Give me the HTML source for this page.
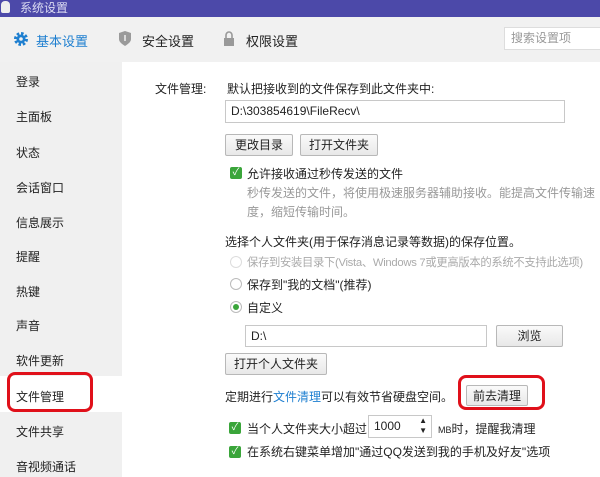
<!DOCTYPE html>
<html><head><meta charset="utf-8"><style>
*{margin:0;padding:0;box-sizing:border-box}
body{width:600px;height:477px;overflow:hidden;background:#fff;font-family:"Liberation Sans","Noto Sans CJK SC",sans-serif;font-size:12px;color:#222;position:relative}
.a{position:absolute;white-space:nowrap}
.btn{position:absolute;border:1px solid #b8b8b8;border-radius:2px;background:linear-gradient(#fafafa,#e8e8e8);text-align:center;font-size:12px;line-height:20px}
.inp{position:absolute;border:1px solid #c8c8c8;background:#fff;padding-left:5px;line-height:20px}
.cb{position:absolute;width:12px;height:12px;background:#3aa53a;border-radius:2px;color:#fff;font-size:10px;line-height:12px;text-align:center}
.rd{position:absolute;width:12px;height:12px;border:1px solid #bbb;border-radius:50%;background:#fff}
.side div{position:absolute;left:16px;font-size:12px}
</style></head><body>
<div class="a" style="left:0;top:0;width:600px;height:17px;background:#4c49a9"></div>
<div class="a" style="left:1px;top:1px;width:9px;height:12px;background:#eee;border-radius:4px 4px 2px 2px"></div>
<div class="a" style="left:20px;top:0;color:#dcdcf2;font-size:12px;line-height:16px">系统设置</div>
<div class="a" style="left:0;top:17px;width:600px;height:45px;background:#f1f1f1"></div>
<svg class="a" style="left:14px;top:32px" width="14" height="14" viewBox="0 0 14 14"><circle cx="7" cy="7" r="5.5" fill="none" stroke="#1e7fd0" stroke-width="3" stroke-dasharray="2.5 1.8"/><circle cx="7" cy="7" r="4.5" fill="#1e7fd0"/><circle cx="7" cy="7" r="1.8" fill="#f1f1f1"/></svg>
<div class="a" style="left:36px;top:31px;font-size:13px;color:#1e7fd0">基本设置</div>
<svg class="a" style="left:118px;top:31px" width="14" height="15" viewBox="0 0 14 15"><path d="M1 2 L7 0 L13 2 V8 C13 11 10 13 7 15 C4 13 1 11 1 8Z" fill="#9a9a9a"/><path d="M7 4 V10" stroke="#eee" stroke-width="1.5"/></svg>
<div class="a" style="left:142px;top:31px;font-size:13px">安全设置</div>
<svg class="a" style="left:223px;top:31px" width="12" height="15" viewBox="0 0 12 15"><path d="M3 7 V4 a3 3 0 0 1 6 0 V7" fill="none" stroke="#999" stroke-width="1.6"/><rect x="1" y="7" width="10" height="8" fill="#999"/></svg>
<div class="a" style="left:246px;top:31px;font-size:13px">权限设置</div>
<div class="a" style="left:504px;top:27px;width:100px;height:23px;background:#fff;border:1px solid #ddd;color:#999;padding-left:6px;line-height:21px">搜索设置项</div>
<div class="a" style="left:0;top:62px;width:122px;height:415px;background:#f0f0f0"></div>
<div class="a" style="left:0;top:376px;width:122px;height:36px;background:#fff"></div>
<div class="side">
<div style="top:73px">登录</div><div style="top:108px">主面板</div><div style="top:144px">状态</div><div style="top:179px">会话窗口</div><div style="top:214px">信息展示</div><div style="top:248px">提醒</div><div style="top:283px">热键</div><div style="top:317px">声音</div><div style="top:352px">软件更新</div><div style="top:388px">文件管理</div><div style="top:423px">文件共享</div><div style="top:458px">音视频通话</div>
</div>
<div class="a" style="left:7px;top:372px;width:86px;height:40px;border:3px solid #e0101a;border-radius:8px"></div>
<div class="a" style="left:155px;top:80px">文件管理:</div>
<div class="a" style="left:227px;top:80px">默认把接收到的文件保存到此文件夹中:</div>
<div class="inp" style="left:225px;top:100px;width:340px;height:23px">D:\303854619\FileRecv\</div>
<div class="btn" style="left:225px;top:134px;width:68px;height:22px">更改目录</div>
<div class="btn" style="left:300px;top:134px;width:78px;height:22px">打开文件夹</div>
<div class="cb" style="left:230px;top:167px">✓</div>
<div class="a" style="left:247px;top:165px">允许接收通过秒传发送的文件</div>
<div class="a" style="left:247px;top:184px;color:#999">秒传发送的文件，将使用极速服务器辅助接收。能提高文件传输速</div>
<div class="a" style="left:247px;top:203px;color:#999">度，缩短传输时间。</div>
<div class="a" style="left:225px;top:233px">选择个人文件夹(用于保存消息记录等数据)的保存位置。</div>
<div class="rd" style="left:230px;top:256px;border-color:#ddd"></div>
<div class="a" style="left:247px;top:254px;color:#aaa;font-size:11.3px;letter-spacing:-0.3px">保存到安装目录下(Vista、Windows 7或更高版本的系统不支持此选项)</div>
<div class="rd" style="left:230px;top:278px"></div>
<div class="a" style="left:247px;top:276px">保存到"我的文档"(推荐)</div>
<div class="rd" style="left:230px;top:301px"><div style="margin:2px;width:6px;height:6px;border-radius:50%;background:#3aa53a"></div></div>
<div class="a" style="left:247px;top:299px">自定义</div>
<div class="inp" style="left:245px;top:325px;width:242px;height:22px">D:\</div>
<div class="btn" style="left:496px;top:325px;width:67px;height:22px">浏览</div>
<div class="btn" style="left:225px;top:353px;width:102px;height:22px">打开个人文件夹</div>
<div class="a" style="left:225px;top:388px">定期进行<span style="color:#1e7fd0">文件清理</span>可以有效节省硬盘空间。</div>
<div class="btn" style="left:466px;top:385px;width:62px;height:21px">前去清理</div>
<div class="a" style="left:458px;top:375px;width:87px;height:35px;border:3px solid #e0101a;border-radius:8px"></div>
<div class="cb" style="left:229px;top:422px">✓</div>
<div class="a" style="left:247px;top:420px">当个人文件夹大小超过</div>
<div class="inp" style="left:368px;top:415px;width:64px;height:23px">1000<span style="position:absolute;right:4px;top:0;font-size:8px;line-height:10px">▲<br>▼</span></div>
<div class="a" style="left:438px;top:420px"><span style="font-size:9px">MB</span>时，提醒我清理</div>
<div class="cb" style="left:229px;top:446px">✓</div>
<div class="a" style="left:247px;top:443px">在系统右键菜单增加"通过QQ发送到我的手机及好友"选项</div>
</body></html>
